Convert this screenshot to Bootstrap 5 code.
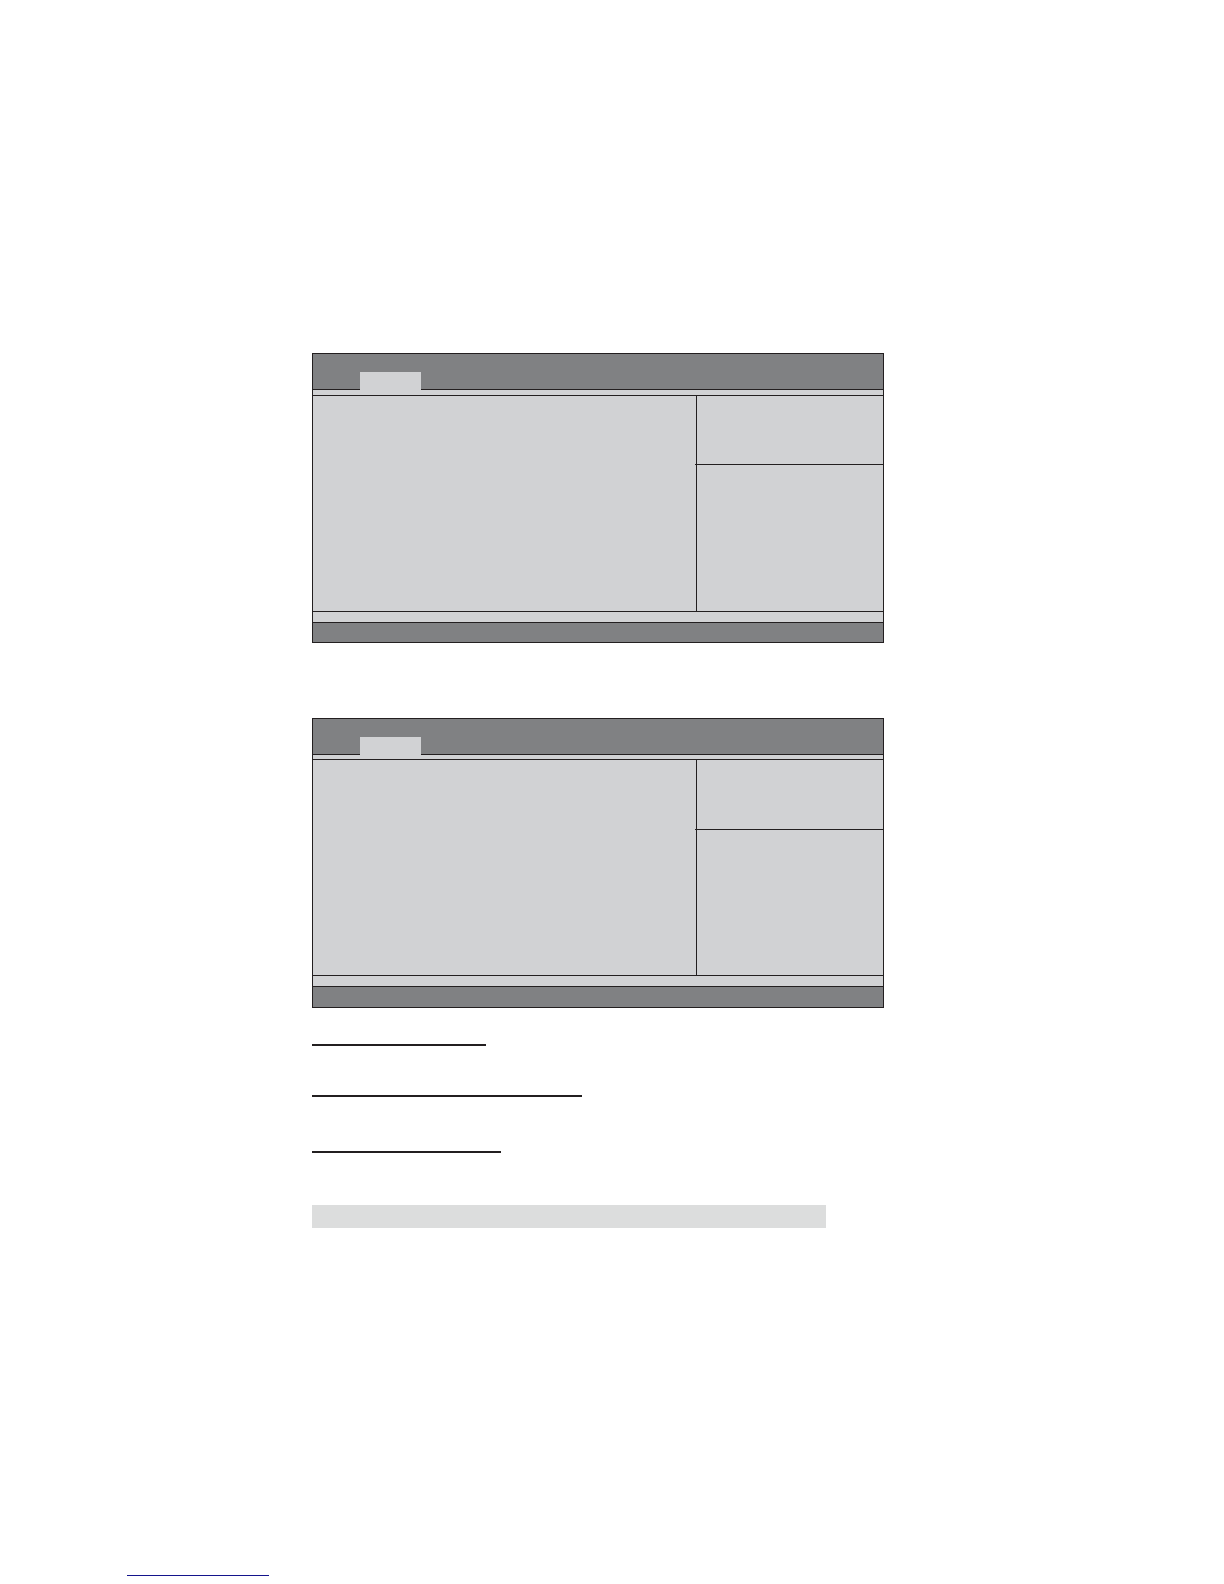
<!DOCTYPE html>
<html lang="en">
<head>
<meta charset="utf-8">
<meta name="viewport" content="width=device-width, initial-scale=1">
<title>Setup screens</title>
<link href="https://cdn.jsdelivr.net/npm/bootstrap@5.3.0/dist/css/bootstrap.min.css" rel="stylesheet">
<style>
  :root { --ink: #231f20; --bar: #808183; --face: #d1d2d4; }
  body { background: #fff; font-family: "Liberation Sans", sans-serif; }
  .sheet { padding: 353px 24px 0 312px; }
  .screen { max-width: 572px; border: 1px solid var(--ink); background: var(--face); }
  .screen + .screen { margin-top: 75px; }
  .screen-head { height: 36px; padding-left: 47px; background: var(--bar); border-bottom: 1px solid var(--ink); }
  .screen-tab { width: 61px; height: 18px; margin-bottom: -1px; background: var(--face); }
  .screen-strip { height: 6px; border-bottom: 1px solid var(--ink); }
  .screen-strip.slim { height: 5px; }
  .screen-main { min-height: 215px; }
  .screen-side { width: 187px; border-left: 1px solid var(--ink); }
  .side-help { height: 69px; margin-left: -2px; border-bottom: 1px solid var(--ink); }
  .side-help.tall { height: 70px; }
  .screen-base { height: 12px; border: solid var(--ink); border-width: 1px 0; }
  .screen-foot { height: 19px; background: var(--bar); }
  .screen-foot.tall { height: 20px; }
  .rule { height: 2px; border: 0; opacity: 1; background: var(--ink); max-width: 100%; }
  .rule-a { width: 174px; margin: 36px 0 49px; }
  .rule-b { width: 270px; margin: 0 0 54px; }
  .rule-c { width: 189px; margin: 0 0 52px; }
  .band { max-width: 514px; height: 23px; background: #dcdddd; }
  .page-foot { padding: 0 127px 8px; }
  .page-link-line { width: 142px; height: 1px; background: #14148c; }
</style>
<script src="https://cdn.jsdelivr.net/npm/bootstrap@5.3.0/dist/js/bootstrap.bundle.min.js"></script>
</head>
<body class="d-flex flex-column min-vh-100">
<main class="sheet">
  <section class="screen d-flex flex-column">
    <header class="screen-head d-flex align-items-end"><div class="screen-tab"></div></header>
    <div class="screen-strip"></div>
    <div class="screen-main d-flex">
      <div class="flex-grow-1"></div>
      <aside class="screen-side flex-shrink-0"><div class="side-help"></div></aside>
    </div>
    <div class="screen-base"></div>
    <footer class="screen-foot"></footer>
  </section>
  <section class="screen d-flex flex-column">
    <header class="screen-head d-flex align-items-end"><div class="screen-tab"></div></header>
    <div class="screen-strip slim"></div>
    <div class="screen-main d-flex">
      <div class="flex-grow-1"></div>
      <aside class="screen-side flex-shrink-0"><div class="side-help tall"></div></aside>
    </div>
    <div class="screen-base"></div>
    <footer class="screen-foot tall"></footer>
  </section>
  <hr class="rule rule-a">
  <hr class="rule rule-b">
  <hr class="rule rule-c">
  <div class="band"></div>
</main>
<footer class="page-foot mt-auto"><a class="page-link-line d-block" href="#"></a></footer>
</body>
</html>
